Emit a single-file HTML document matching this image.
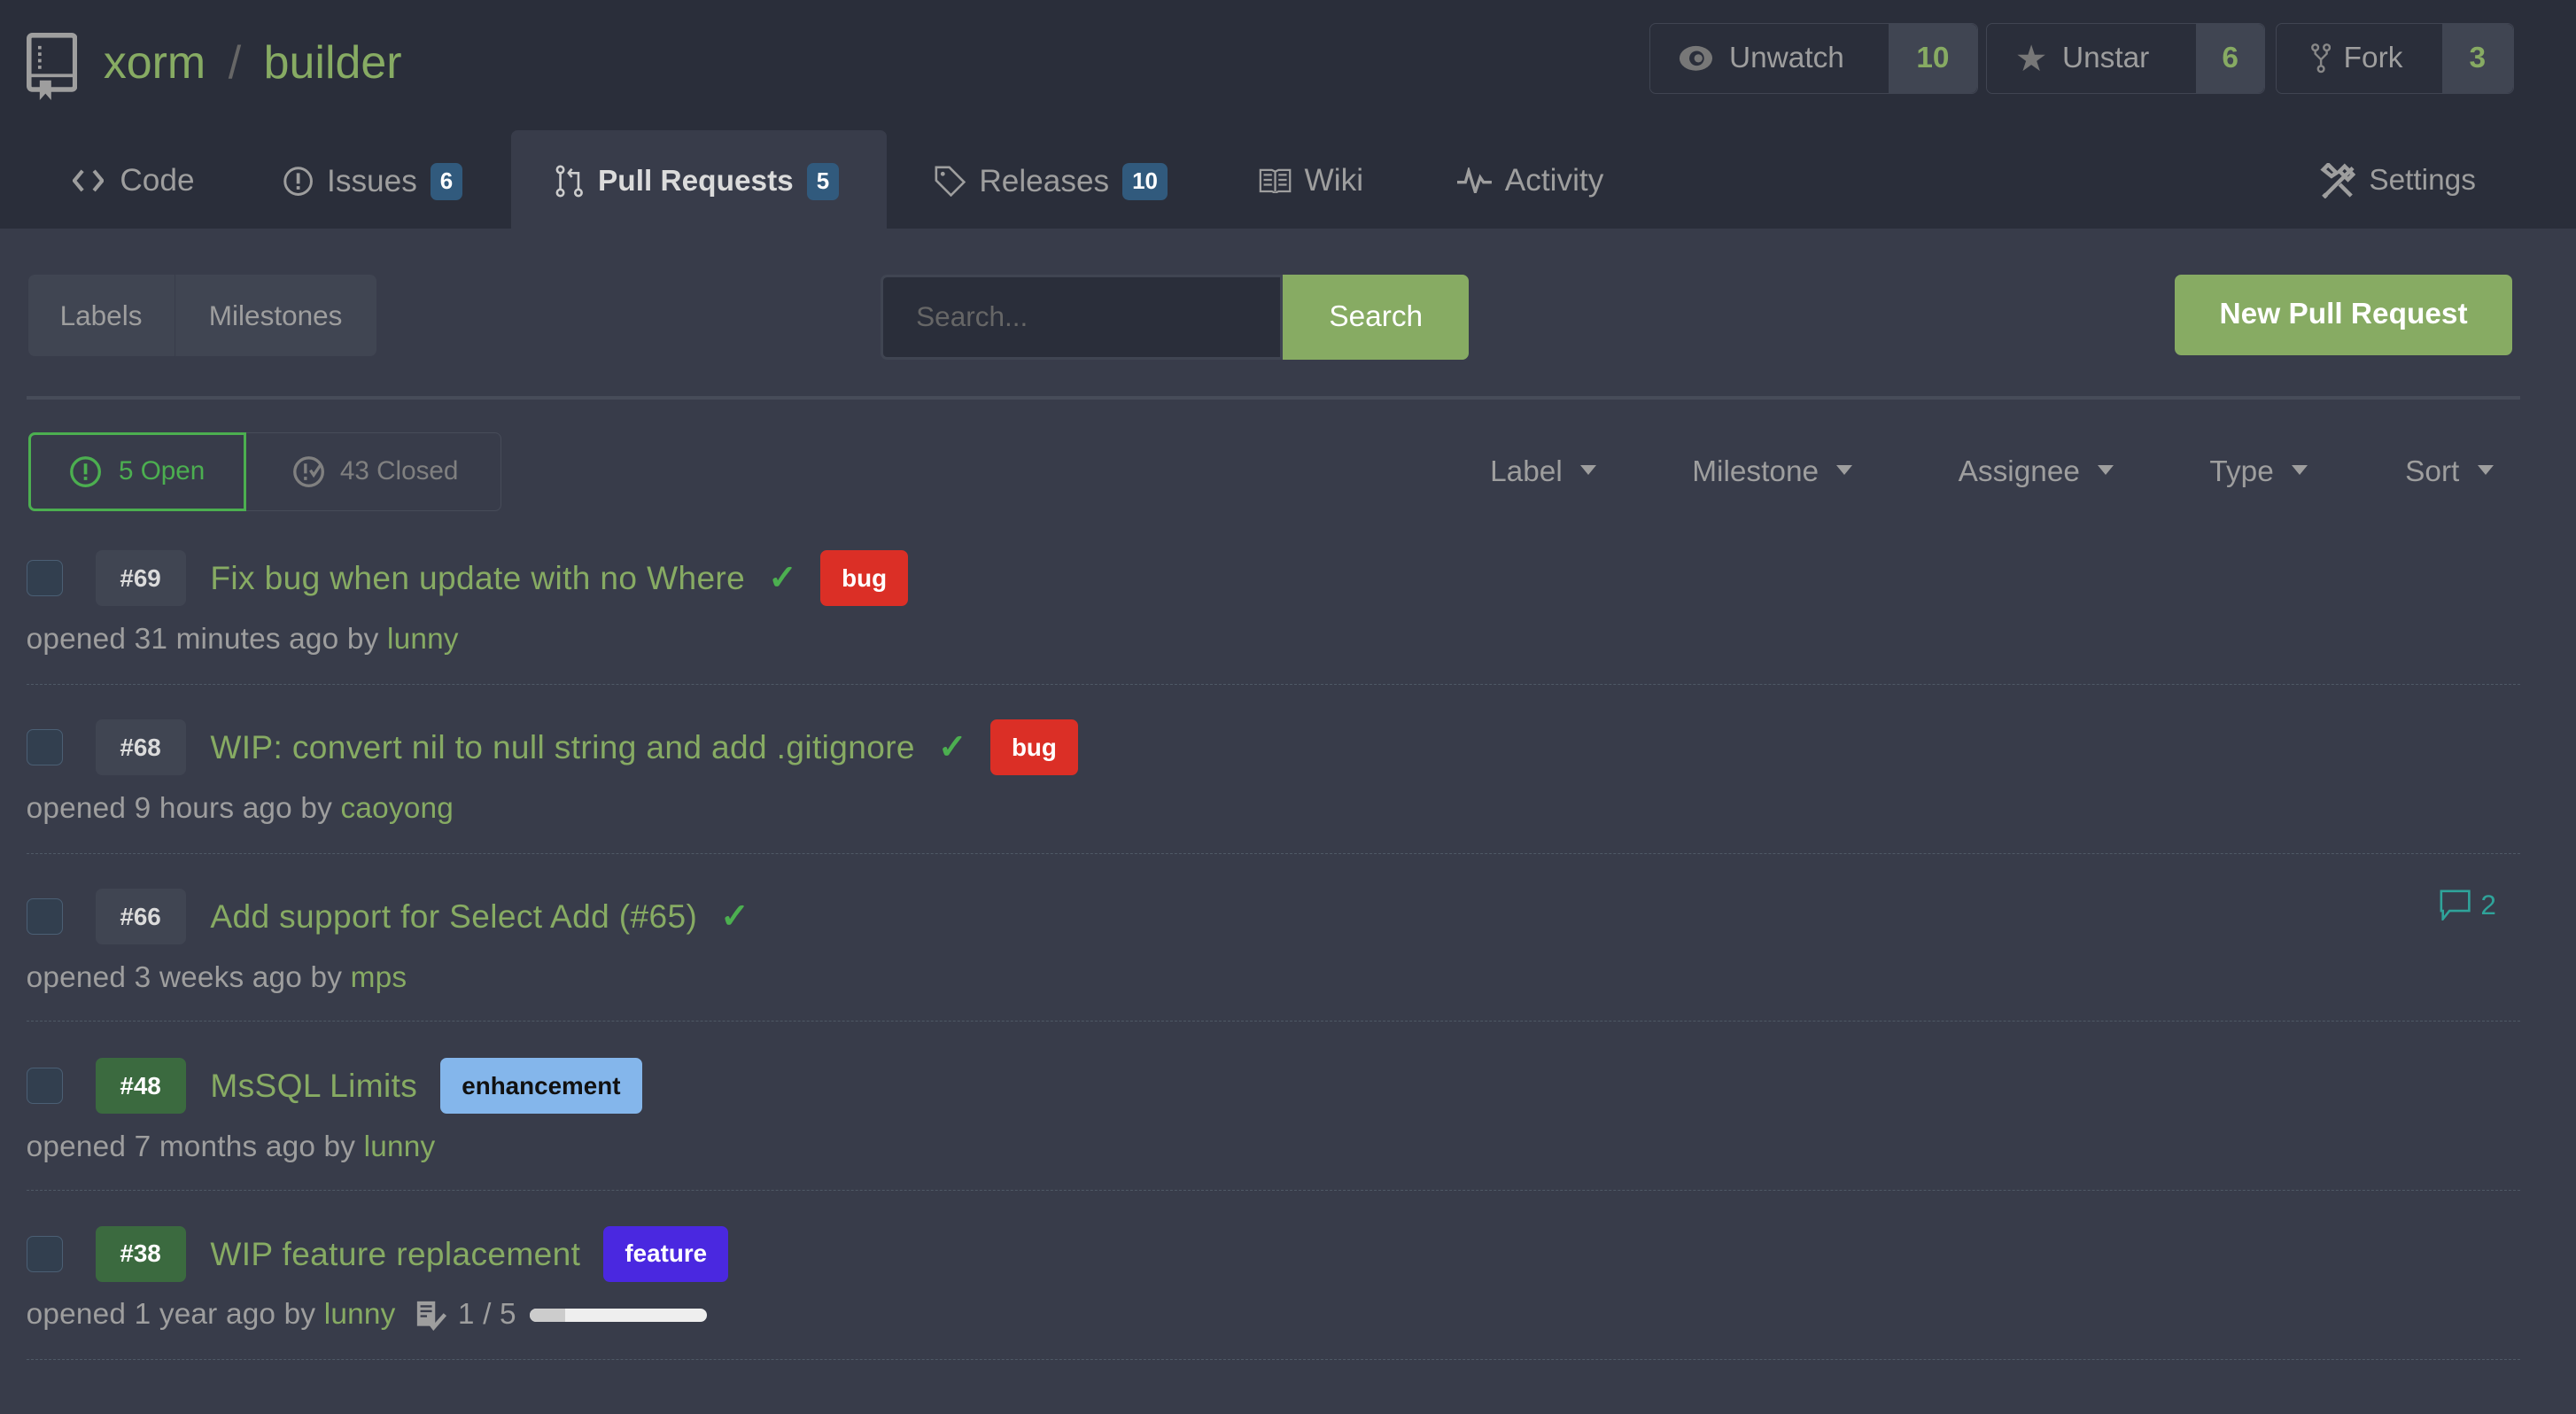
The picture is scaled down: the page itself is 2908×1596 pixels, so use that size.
<!DOCTYPE html>
<html><head><meta charset="utf-8"><style>
html,body{margin:0;padding:0;background:#383c4a;overflow:hidden;width:2908px;height:1596px}
#w{zoom:1.8546;position:relative;width:1568px;height:861px;font-family:"Liberation Sans",sans-serif;color:#9e9e9e}
.a{position:absolute;white-space:nowrap}
.hdr{position:absolute;left:0;top:0;width:1568px;height:139px;background:#2a2e3a}
.g{color:#87ab63}
.btn{position:absolute;top:14px;border:1px solid #404552;border-radius:4px;display:flex;font-size:18px;box-sizing:border-box;height:43px}
.btn .l{display:flex;align-items:center;padding-left:17px;color:#9e9e9e;background:#2a2e3a;border-radius:4px 0 0 4px;box-sizing:border-box}
.btn .c{display:flex;align-items:center;justify-content:center;background:#404552;color:#87ab63;font-weight:bold;border-radius:0 4px 4px 0}
.tab{position:absolute;top:99px;font-size:19px;color:#9e9e9e;display:flex;align-items:center;gap:8px}
.bdg{color:#fff;font-size:14px;font-weight:bold;border-radius:4px;padding:3px 6px;background:#315a7d}
.cb{position:absolute;left:16px;width:21px;height:21px;border:1px solid #4b5f74;background:#323f4f;border-radius:4px}
.num{position:absolute;left:58px;width:55px;height:34px;border-radius:4px;background:#404552;color:#dbdbdb;font-weight:bold;font-size:15px;display:flex;align-items:center;justify-content:center}
.ttl{position:absolute;left:128px;font-size:20px;color:#87ab63;display:flex;align-items:center;gap:14px;height:34px;letter-spacing:0.2px}
.lbl{color:#fff;font-size:15px;font-weight:bold;border-radius:4px;height:34px;display:flex;align-items:center;padding:0 13px;letter-spacing:0}
.meta{position:absolute;left:16px;font-size:18px;color:#9e9e9e;letter-spacing:0.1px}
.sep{position:absolute;left:16px;width:1518px;border-top:1px dashed #4f5966}
.chk{color:#4caf50;font-size:21px;font-weight:bold}
.flt{position:absolute;top:277px;font-size:18px;color:#9e9e9e}
.flt:after{content:"";display:inline-block;margin-left:11px;border:5px solid transparent;border-top:6px solid #9e9e9e;vertical-align:-1px}
</style></head><body><div id="w">
<div class="hdr"></div>
<svg class="a" style="left:16px;top:20px" width="31" height="42" viewBox="0 0 31 42"><rect x="1.5" y="1.5" width="28" height="33" rx="2" fill="none" stroke="#9e9e9e" stroke-width="3"/><line x1="1.5" y1="26" x2="29.5" y2="26" stroke="#9e9e9e" stroke-width="2"/><path d="M8 8v2M8 12v2M8 16v2M8 20v2" stroke="#9e9e9e" stroke-width="2"/><path d="M8 29h7v12l-3.5-4-3.5 4z" fill="#9e9e9e"/></svg>
<div class="a g" style="left:63px;top:22px;font-size:28px">xorm <span style="color:#666;margin:0 6px">/</span> builder</div>

<div class="btn" style="left:1004px;width:200px"><div class="l" style="width:145px"><svg width="21" height="16" viewBox="0 0 21 16" style="margin-right:10px"><ellipse cx="10.5" cy="8" rx="10" ry="7.5" fill="#777"/><circle cx="11" cy="8" r="4.5" fill="#2a2e3a"/><circle cx="12" cy="8" r="2.5" fill="#777"/></svg>Unwatch</div><div class="c" style="flex:1">10</div></div>
<div class="btn" style="left:1209px;width:170px"><div class="l" style="width:127px"><span style="color:#777;font-size:22px;margin-right:9px">★</span>Unstar</div><div class="c" style="flex:1">6</div></div>
<div class="btn" style="left:1385px;width:145px"><div class="l" style="width:101px;padding-left:21px"><svg width="12" height="18" viewBox="0 0 12 18" style="margin-right:8px"><circle cx="2.5" cy="2.5" r="1.8" fill="none" stroke="#888" stroke-width="1.3"/><circle cx="9.5" cy="2.5" r="1.8" fill="none" stroke="#888" stroke-width="1.3"/><circle cx="6" cy="15.5" r="1.8" fill="none" stroke="#888" stroke-width="1.3"/><path d="M2.5 4.3v2l3.5 3.5 3.5-3.5v-2M6 9.8v3.9" fill="none" stroke="#888" stroke-width="1.3"/></svg>Fork</div><div class="c" style="flex:1">3</div></div>

<div class="a" style="left:311px;top:79px;width:229px;height:60px;background:#383c4a;border-radius:4px 4px 0 0"></div>
<div class="tab" style="left:44px;gap:10px"><svg width="19" height="14" viewBox="0 0 19 14"><path d="M6 1 1 7l5 6M13 1l5 6-5 6" fill="none" stroke="#9e9e9e" stroke-width="2.2"/></svg>Code</div>
<div class="tab" style="left:172px"><svg width="19" height="19"><circle cx="9.5" cy="9.5" r="8" fill="none" stroke="#9e9e9e" stroke-width="1.6"/><path d="M9.5 4.5v6.5M9.5 12.5v2" stroke="#9e9e9e" stroke-width="2"/></svg>Issues<span class="bdg">6</span></div>
<div class="tab" style="left:338px;color:#dbdbdb;font-weight:bold;font-size:18px"><svg width="18" height="20" viewBox="0 0 18 20"><circle cx="3" cy="3" r="2" fill="none" stroke="#ccc" stroke-width="1.4"/><circle cx="3" cy="17" r="2" fill="none" stroke="#ccc" stroke-width="1.4"/><circle cx="14" cy="17" r="2" fill="none" stroke="#ccc" stroke-width="1.4"/><path d="M3 5v10M14 15V5h-5M10 2.5 8 5l2 2.5" fill="none" stroke="#ccc" stroke-width="1.4"/></svg>Pull Requests<span class="bdg">5</span></div>
<div class="tab" style="left:569px"><svg width="19" height="19" viewBox="0 0 19 19"><path d="M1 1h8l9 9-8 8-9-9z" fill="none" stroke="#9e9e9e" stroke-width="1.4"/><circle cx="5" cy="5" r="1.3" fill="#9e9e9e"/></svg>Releases<span class="bdg">10</span></div>
<div class="tab" style="left:766px"><svg width="20" height="15" viewBox="0 0 20 15"><path d="M1 1h7l2 1 2-1h7v13h-7l-2 1-2-1H1z M10 2v12 M3 4h5M3 7h5M3 10h5M12 4h5M12 7h5M12 10h5" fill="none" stroke="#9e9e9e" stroke-width="1.2"/></svg>Wiki</div>
<div class="tab" style="left:887px"><svg width="21" height="16" viewBox="0 0 21 16"><path d="M0 9h5l2-7 4 13 3-9 2 3h5" fill="none" stroke="#9e9e9e" stroke-width="1.8"/></svg>Activity</div>
<div class="tab" style="left:1412px;font-size:18px"><svg width="22" height="22" viewBox="0 0 22 22"><path d="M3 20 20 3M2 19l2 2M15 2l5 5-3 3-5-5zM2 4l3-3 5 5-3 2z M12 13l7 7" fill="none" stroke="#9e9e9e" stroke-width="2.4"/></svg>Settings</div>

<div class="a" style="left:17px;top:167px;width:212px;height:50px;background:#404552;border-radius:4px;display:flex;font-size:17px;align-items:center"><span style="width:89px;text-align:center;border-right:1px solid #383c4a;line-height:50px">Labels</span><span style="flex:1;text-align:center">Milestones</span></div>
<div class="a" style="left:536px;top:167px;width:245px;height:52px;background:#2a2e3a;border:2px solid #404552;box-sizing:border-box;border-radius:4px 0 0 4px;font-size:17px;color:#666;line-height:48px;padding-left:20px">Search...</div>
<div class="a" style="left:781px;top:167px;width:113px;height:52px;background:#87ab63;color:#fff;font-size:18px;line-height:52px;text-align:center;border-radius:0 4px 4px 0">Search</div>
<div class="a" style="left:1324px;top:167px;width:205px;height:49px;background:#87ab63;color:#fff;font-size:18px;font-weight:bold;line-height:49px;text-align:center;border-radius:4px">New Pull Request</div>
<div class="a" style="left:16px;top:241px;width:1518px;height:2px;background:#474c59"></div>

<div class="a" style="left:17px;top:263px;width:288px;height:48px;border:1px solid #474c59;border-radius:4px;box-sizing:border-box"></div>
<div class="a" style="left:17px;top:263px;width:133px;height:48px;border:2px solid #4caf50;box-sizing:border-box;border-radius:4px 0 0 4px;display:flex;align-items:center;justify-content:center;gap:10px;font-size:16px;color:#4caf50"><svg width="20" height="20"><circle cx="10" cy="10" r="8.5" fill="none" stroke="#4caf50" stroke-width="1.8"/><path d="M10 5v6.5M10 13v2" stroke="#4caf50" stroke-width="2"/></svg>5 Open</div>
<div class="a" style="left:178px;top:277px;font-size:16px;color:#808080;display:flex;align-items:center;gap:9px"><svg width="20" height="20"><circle cx="10" cy="10" r="8.5" fill="none" stroke="#808080" stroke-width="1.8"/><path d="M8 5v6M8 13v2M11 9l2 3 4-6" stroke="#808080" stroke-width="1.8" fill="none"/></svg>43 Closed</div>
<div class="flt" style="left:907px">Label</div>
<div class="flt" style="left:1030px">Milestone</div>
<div class="flt" style="left:1192px">Assignee</div>
<div class="flt" style="left:1345px">Type</div>
<div class="flt" style="left:1464px">Sort</div>

<div class="cb" style="top:341px"></div><div class="num" style="top:335px">#69</div>
<div class="ttl" style="top:335px">Fix bug when update with no Where<span class="chk">✓</span><span class="lbl" style="background:#db2f26">bug</span></div>
<div class="meta" style="top:379px">opened 31 minutes ago by <span class="g">lunny</span></div>
<div class="sep" style="top:416px"></div>

<div class="cb" style="top:444px"></div><div class="num" style="top:438px">#68</div>
<div class="ttl" style="top:438px">WIP: convert nil to null string and add .gitignore<span class="chk">✓</span><span class="lbl" style="background:#db2f26">bug</span></div>
<div class="meta" style="top:482px">opened 9 hours ago by <span class="g">caoyong</span></div>
<div class="sep" style="top:519px"></div>

<div class="cb" style="top:547px"></div><div class="num" style="top:541px">#66</div>
<div class="ttl" style="top:541px">Add support for Select Add (#65)<span class="chk">✓</span></div>
<div class="a" style="left:1485px;top:541px;font-size:17px;color:#2fa39a;display:flex;align-items:center;gap:5px"><svg width="20" height="19" viewBox="0 0 20 19"><path d="M1 1h17v12H6l-4 5v-5H1z" fill="none" stroke="#2fa39a" stroke-width="1.4"/></svg>2</div>
<div class="meta" style="top:585px">opened 3 weeks ago by <span class="g">mps</span></div>
<div class="sep" style="top:621px"></div>

<div class="cb" style="top:650px"></div><div class="num" style="top:644px;background:#3b6a3f;color:#fff">#48</div>
<div class="ttl" style="top:644px">MsSQL Limits<span class="lbl" style="background:#84b6eb;color:#111">enhancement</span></div>
<div class="meta" style="top:688px">opened 7 months ago by <span class="g">lunny</span></div>
<div class="sep" style="top:724px"></div>

<div class="cb" style="top:752px"></div><div class="num" style="top:746px;background:#3b6a3f;color:#fff">#38</div>
<div class="ttl" style="top:746px">WIP feature replacement<span class="lbl" style="background:#4a28e0">feature</span></div>
<div class="meta" style="top:790px;display:flex;align-items:center">opened 1 year ago by&nbsp;<span class="g">lunny</span><svg width="20" height="19" viewBox="0 0 20 19" style="margin:0 6px 0 12px"><rect x="1" y="1" width="11" height="15" fill="#9e9e9e"/><path d="M3 4h7M3 7h7M3 10h4" stroke="#383c4a" stroke-width="1.3"/><path d="M8 13l3 4 7-8" fill="none" stroke="#9e9e9e" stroke-width="2.4"/></svg>1 / 5<span style="display:inline-block;margin-left:8px;width:108px;height:8px;border-radius:4px;background:#eee;position:relative;overflow:hidden"><span style="position:absolute;left:0;top:0;width:22px;height:8px;background:#ccc"></span></span></div>
<div class="sep" style="top:827px"></div>
</div></body></html>
